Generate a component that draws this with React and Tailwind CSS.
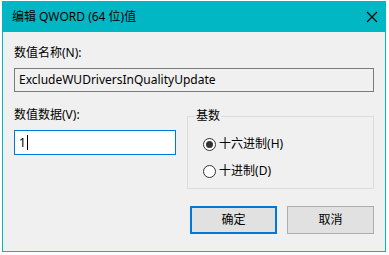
export default function App() {
  const font = { fontFamily: '"Noto Sans", "Noto Sans CJK SC", sans-serif' };

  return (
    <div className="w-[389px] h-[255px] bg-white pt-[1px] pl-[2px]" style={font}>
      <div className="w-[384px] h-[251px] border border-[#00b7c3] bg-[#f0f0f0] flex flex-col">
        {/* Title bar */}
        <div className="h-[30px] bg-[#00b7c3] flex items-center justify-between pl-[9px] pr-[7px] shrink-0">
          <span className="text-[12px] leading-[16px] text-black">编辑 QWORD (64 位)值</span>
          <svg width="12" height="12" viewBox="0 0 12 12">
            <path d="M1 1 L11 11 M11 1 L1 11" stroke="#000" strokeWidth="1.1" />
          </svg>
        </div>

        {/* Body */}
        <div className="flex-1 pl-[11px] pr-[11px] pt-[13px] text-[12px] leading-[16px] text-black">
          <div>数值名称(N):</div>
          <div className="mt-[7px] w-[360px] h-[24px] border border-[#7a7a7a] bg-[#f0f0f0] flex items-center px-[4px]">
            ExcludeWUDriversInQualityUpdate
          </div>

          <div className="flex mt-[16px]">
            <div className="w-[174px]">
              <div className="mt-[-1px]">数值数据(V):</div>
              <div className="mt-[7px] w-[162px] h-[25px] border border-[#0078d7] bg-white flex items-center px-[4px]">
                <span>1</span>
                <span className="w-[1px] h-[15px] bg-black ml-[1px]" />
              </div>
            </div>

            <div className="relative mt-[8px] w-[188px] h-[73px] border border-[#dcdcdc]">
              <span className="absolute left-[7px] top-[-9px] bg-[#f0f0f0] px-[1px]">基数</span>
              <div className="flex flex-col gap-[11px] pl-[15px] pt-[19px]">
                <label className="flex items-center gap-[3px]">
                  <span className="w-[13px] h-[13px] rounded-full border border-[#333] bg-white flex items-center justify-center">
                    <span className="w-[7px] h-[7px] rounded-full bg-[#333]" />
                  </span>
                  十六进制(H)
                </label>
                <label className="flex items-center gap-[3px]">
                  <span className="w-[13px] h-[13px] rounded-full border border-[#333] bg-white" />
                  十进制(D)
                </label>
              </div>
            </div>
          </div>

          <div className="flex justify-end gap-[10px] mt-[17px]">
            <button className="w-[87px] h-[28px] border-2 border-[#0078d7] bg-[#e1e1e1] text-[12px]">确定</button>
            <button className="w-[87px] h-[28px] border border-[#adadad] bg-[#e1e1e1] text-[12px]">取消</button>
          </div>
        </div>
      </div>
    </div>
  );
}
